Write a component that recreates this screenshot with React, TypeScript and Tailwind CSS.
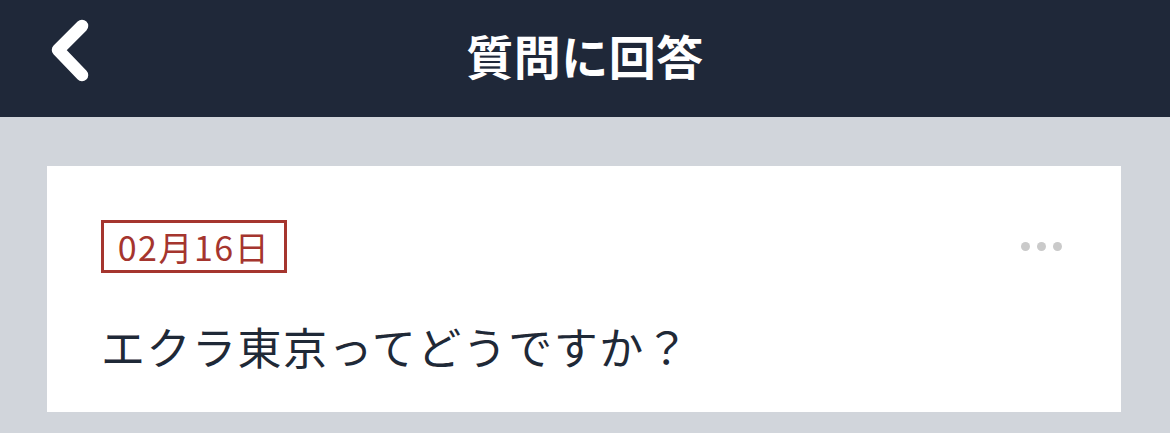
export default function App() {
  return (
    <div className="w-[1170px] h-[433px] bg-[#d1d5db] font-['Noto_Sans_CJK_JP','Noto_Sans',sans-serif] overflow-hidden">
      <header className="h-[117px] bg-[#1f2839] grid grid-cols-[1fr_auto_1fr] items-center">
        <button className="pl-[47px] pt-[14px] flex items-start h-full">
          <svg width="50" height="72" viewBox="0 0 50 72" fill="none">
            <path d="M35 12 L11 36 L35 61" stroke="white" strokeWidth="12.5" strokeLinecap="round" strokeLinejoin="round" />
          </svg>
        </button>
        <h1 className="text-white text-[47px] font-bold leading-none tracking-[0.5px] pb-[8px]">質問に回答</h1>
        <div />
      </header>
      <main className="pl-[47px] pr-[49px] pt-[49px]">
        <div className="bg-white h-[246px] pt-[54px] pl-[54px] pr-[59px]">
          <div className="flex items-center justify-between">
            <span className="h-[53px] w-[186px] border-[3px] border-[#a5352e] text-[#a5352e] text-[34px] leading-none flex items-center justify-center tracking-[1.5px]">
              02月16日
            </span>
            <div className="flex gap-[7px]">
              <span className="w-[9px] h-[9px] rounded-full bg-[#cacaca]" />
              <span className="w-[9px] h-[9px] rounded-full bg-[#cacaca]" />
              <span className="w-[9px] h-[9px] rounded-full bg-[#cacaca]" />
            </div>
          </div>
          <p className="mt-[51px] text-[44px] leading-none tracking-[1.5px] text-[#1f2937]">エクラ東京ってどうですか？</p>
        </div>
      </main>
    </div>
  );
}
